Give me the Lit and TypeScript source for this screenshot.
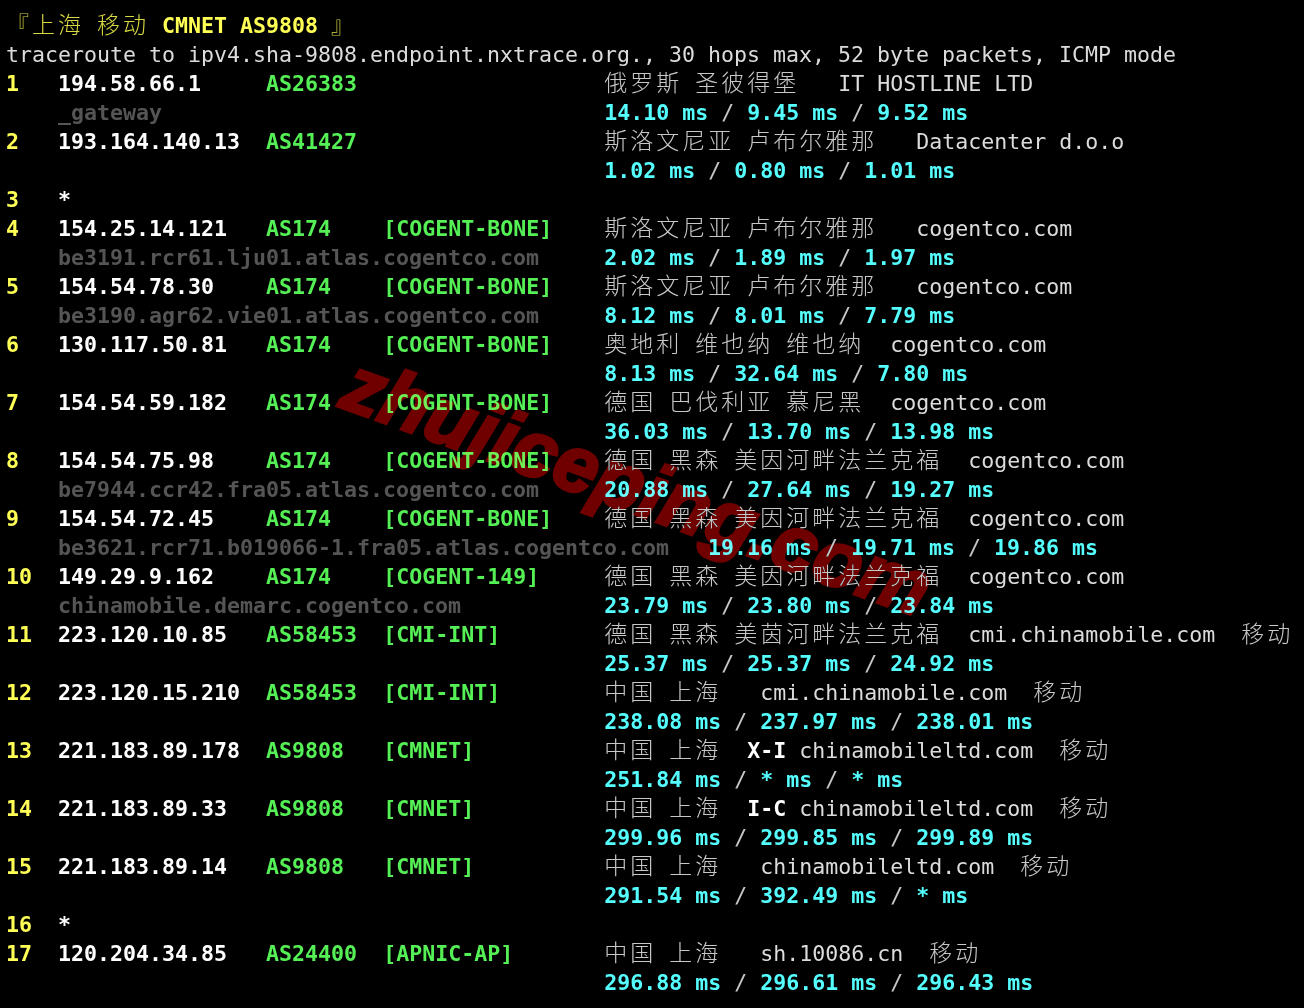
import { LitElement, html, css } from "lit";
import { customElement } from "lit/decorators.js";

type Row = { hop: string; ip?: string; as?: string; name?: string; loc?: string; host?: string; lat?: string; gap?: number };

const CG = "[COGENT-BONE]";
const SI = "斯洛文尼亚 卢布尔雅那   ";
const FF = "德国 黑森 美因河畔法兰克福  cogentco.com";
const rows: Row[] = [
  { hop: "1", ip: "194.58.66.1", as: "AS26383", loc: "俄罗斯 圣彼得堡   IT HOSTLINE LTD", host: "_gateway", lat: "14.10 ms / 9.45 ms / 9.52 ms" },
  { hop: "2", ip: "193.164.140.13", as: "AS41427", loc: SI + "Datacenter d.o.o", lat: "1.02 ms / 0.80 ms / 1.01 ms" },
  { hop: "3", ip: "*" },
  { hop: "4", ip: "154.25.14.121", as: "AS174", name: CG, loc: SI + "cogentco.com", host: "be3191.rcr61.lju01.atlas.cogentco.com", lat: "2.02 ms / 1.89 ms / 1.97 ms" },
  { hop: "5", ip: "154.54.78.30", as: "AS174", name: CG, loc: SI + "cogentco.com", host: "be3190.agr62.vie01.atlas.cogentco.com", lat: "8.12 ms / 8.01 ms / 7.79 ms" },
  { hop: "6", ip: "130.117.50.81", as: "AS174", name: CG, loc: "奥地利 维也纳 维也纳  cogentco.com", lat: "8.13 ms / 32.64 ms / 7.80 ms" },
  { hop: "7", ip: "154.54.59.182", as: "AS174", name: CG, loc: "德国 巴伐利亚 慕尼黑  cogentco.com", lat: "36.03 ms / 13.70 ms / 13.98 ms" },
  { hop: "8", ip: "154.54.75.98", as: "AS174", name: CG, loc: FF, host: "be7944.ccr42.fra05.atlas.cogentco.com", lat: "20.88 ms / 27.64 ms / 19.27 ms" },
  { hop: "9", ip: "154.54.72.45", as: "AS174", name: CG, loc: FF, host: "be3621.rcr71.b019066-1.fra05.atlas.cogentco.com", lat: "19.16 ms / 19.71 ms / 19.86 ms", gap: 3 },
  { hop: "10", ip: "149.29.9.162", as: "AS174", name: "[COGENT-149]", loc: FF, host: "chinamobile.demarc.cogentco.com", lat: "23.79 ms / 23.80 ms / 23.84 ms" },
  { hop: "11", ip: "223.120.10.85", as: "AS58453", name: "[CMI-INT]", loc: "德国 黑森 美茵河畔法兰克福  cmi.chinamobile.com  移动", lat: "25.37 ms / 25.37 ms / 24.92 ms" },
  { hop: "12", ip: "223.120.15.210", as: "AS58453", name: "[CMI-INT]", loc: "中国 上海   cmi.chinamobile.com  移动", lat: "238.08 ms / 237.97 ms / 238.01 ms" },
  { hop: "13", ip: "221.183.89.178", as: "AS9808", name: "[CMNET]", loc: "中国 上海  **X-I** chinamobileltd.com  移动", lat: "251.84 ms / * ms / * ms" },
  { hop: "14", ip: "221.183.89.33", as: "AS9808", name: "[CMNET]", loc: "中国 上海  **I-C** chinamobileltd.com  移动", lat: "299.96 ms / 299.85 ms / 299.89 ms" },
  { hop: "15", ip: "221.183.89.14", as: "AS9808", name: "[CMNET]", loc: "中国 上海   chinamobileltd.com  移动", lat: "291.54 ms / 392.49 ms / * ms" },
  { hop: "16", ip: "*" },
  { hop: "17", ip: "120.204.34.85", as: "AS24400", name: "[APNIC-AP]", loc: "中国 上海   sh.10086.cn  移动", lat: "296.88 ms / 296.61 ms / 296.43 ms" },
];

const CJK = /([\u3000-\u303f\u3400-\u9fff\uff00-\uffef]+)/;

function text(s: string) {
  return s.split(CJK).map((p, i) => (i % 2 ? html`<span class="cjk">${p}</span>` : p));
}
function loc(s: string) {
  return s.split("**").map((p, i) => (i % 2 ? html`<b class="wh">${p}</b>` : text(p)));
}
function lat(s: string) {
  return s.split(" / ").map((p, i) => html`${i ? html`<span class="sl"> / </span>` : ""}<b class="cy">${p}</b>`);
}

@customElement("app-root")
export class AppRoot extends LitElement {
  static styles = css`
    :host {
      display: block;
      position: relative;
      height: 1008px;
      overflow: hidden;
      background: #000;
    }
    .term {
      padding: 11px 0 0 6px;
      font-family: "DejaVu Sans Mono", monospace;
      font-size: 21.6px;
      color: #dcdcdc;
    }
    .ln {
      display: grid;
      grid-template-columns: 52px 208px 117.2px 221px 1fr;
      height: 29px;
      line-height: 29px;
      white-space: pre;
    }
    .plain {
      height: 29px;
      line-height: 29px;
      white-space: pre;
    }
    .c5 {
      grid-column: 5;
    }
    .c2 {
      grid-column: 2 / 5;
    }
    .c2wide {
      grid-column: 2 / -1;
    }
    b {
      font-weight: 700;
    }
    .cjk {
      font-family: "Noto Sans CJK SC", sans-serif;
      font-size: 23px;
      letter-spacing: 3px;
      line-height: 1;
      font-weight: 300;
      color: #c8c8c8;
    }
    .ye {
      color: #ffff55;
    }
    .ye .cjk {
      color: #d8d840;
    }
    .wh {
      color: #fff;
    }
    .gr {
      color: #55f055;
    }
    .cy {
      color: #55ffff;
    }
    .sl {
      color: #c8c8c8;
    }
    .dim {
      color: #555;
      font-weight: 700;
    }
    .mark {
      position: absolute;
      left: 338px;
      top: 333px;
      font-family: "Liberation Sans", sans-serif;
      font-size: 79px;
      font-weight: 700;
      font-style: italic;
      color: #700000;
      -webkit-text-stroke: 3px #700000;
      white-space: nowrap;
      transform-origin: 0 71px;
      transform: rotate(20deg);
      mix-blend-mode: lighten;
    }
  `;

  render() {
    const out = rows.map((r) => {
      const first = html`<div class="ln">
        <b class="ye">${r.hop}</b><b class="wh">${r.ip}</b>
        ${r.as ? html`<b class="gr">${r.as}</b><b class="gr">${r.name ?? ""}</b><span>${loc(r.loc!)}</span>` : ""}
      </div>`;
      if (!r.lat) return first;
      const second = r.gap
        ? html`<div class="ln"><span></span><span class="c2wide"><b class="dim">${r.host}</b>${" ".repeat(r.gap)}${lat(r.lat)}</span></div>`
        : html`<div class="ln"><span></span><b class="dim c2">${r.host ?? ""}</b><span class="c5">${lat(r.lat)}</span></div>`;
      return html`${first}${second}`;
    });
    return html`<div class="term">
        <div class="plain"><span class="ye"><span class="cjk">『上海</span> <span class="cjk">移动</span> <b>CMNET AS9808</b> <span class="cjk">』</span></span></div>
        <div class="plain">traceroute to ipv4.sha-9808.endpoint.nxtrace.org., 30 hops max, 52 byte packets, ICMP mode</div>
        ${out}
      </div>
      <div class="mark">zhujiceping.com</div>`;
  }
}
